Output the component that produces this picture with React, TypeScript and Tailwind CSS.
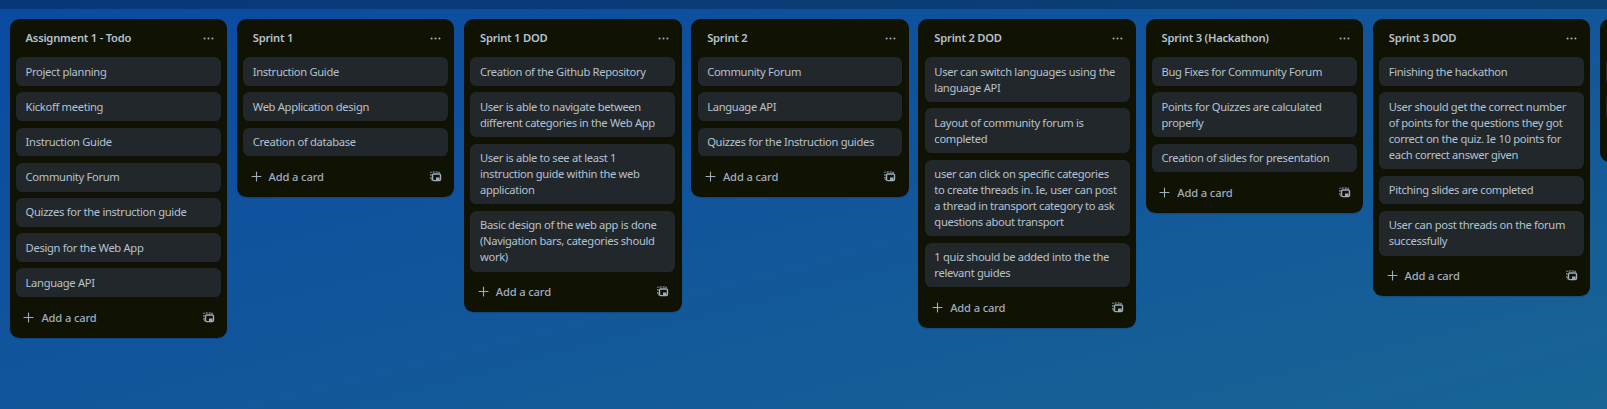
import React from "react";

type List = { title: string; cards: string[][] };

const lists: List[] = [
  {
    title: "Assignment 1 - Todo",
    cards: [
      ["Project planning"],
      ["Kickoff meeting"],
      ["Instruction Guide"],
      ["Community Forum"],
      ["Quizzes for the instruction guide"],
      ["Design for the Web App"],
      ["Language API"],
    ],
  },
  { title: "Sprint 1", cards: [["Instruction Guide"], ["Web Application design"], ["Creation of database"]] },
  {
    title: "Sprint 1 DOD",
    cards: [
      ["Creation of the Github Repository"],
      ["User is able to navigate between", "different categories in the Web App"],
      ["User is able to see at least 1", "instruction guide within the web", "application"],
      ["Basic design of the web app is done", "(Navigation bars, categories should", "work)"],
    ],
  },
  { title: "Sprint 2", cards: [["Community Forum"], ["Language API"], ["Quizzes for the Instruction guides"]] },
  {
    title: "Sprint 2 DOD",
    cards: [
      ["User can switch languages using the", "language API"],
      ["Layout of community forum is", "completed"],
      [
        "user can click on specific categories",
        "to create threads in. Ie, user can post",
        "a thread in transport category to ask",
        "questions about transport",
      ],
      ["1 quiz should be added into the the", "relevant guides"],
    ],
  },
  {
    title: "Sprint 3 (Hackathon)",
    cards: [
      ["Bug Fixes for Community Forum"],
      ["Points for Quizzes are calculated", "properly"],
      ["Creation of slides for presentation"],
    ],
  },
  {
    title: "Sprint 3 DOD",
    cards: [
      ["Finishing the hackathon"],
      [
        "User should get the correct number",
        "of points for the questions they got",
        "correct on the quiz. Ie 10 points for",
        "each correct answer given",
      ],
      ["Pitching slides are completed"],
      ["User can post threads on the forum", "successfully"],
    ],
  },
];

function MoreIcon() {
  return (
    <svg viewBox="0 0 13 13" className="size-[13px]" fill="currentColor">
      <circle cx="2.6" cy="6.5" r="1.05" />
      <circle cx="6.5" cy="6.5" r="1.05" />
      <circle cx="10.4" cy="6.5" r="1.05" />
    </svg>
  );
}

function PlusIcon() {
  return (
    <svg viewBox="0 0 13 13" className="size-[13px]" fill="none" stroke="currentColor" strokeWidth="1.1" strokeLinecap="round">
      <path d="M6.5 2v9M2 6.5h9" />
    </svg>
  );
}

function TemplateIcon() {
  return (
    <svg viewBox="0 0 13 13" className="size-[13px]" fill="none" stroke="currentColor">
      <path d="M1.3 2.300h1.400M3.700 2h2M6.700 2h2M9.500 2.400h1.200M1.900 4v1.800M1.900 7v1.800M1.900 9.800h1" strokeWidth="1.1" />
      <rect x="3.500" y="4" width="8" height="6.600" rx="1.300" strokeWidth="1.4" />
      <rect x="7" y="7.500" width="3.500" height="2.500" fill="currentColor" stroke="none" />
    </svg>
  );
}

function Column({ list }: { list: List }) {
  return (
    <section className="w-[217.6px] shrink-0 rounded-[9.6px] bg-[#101204] px-[6.4px] pb-[6.4px] text-[#b6c2cf] shadow-[0_1px_1px_rgba(9,30,66,0.25)]">
      <header className="flex h-[38px] items-center justify-between pr-[5.500px] pl-[9.6px]">
        <h2 className="text-[11.2px] leading-4 font-semibold tracking-[-0.23px] whitespace-nowrap">{list.title}</h2>
        <span className="text-[#9fadbc]"><MoreIcon /></span>
      </header>
      <ol className="flex flex-col gap-[6.4px]">
        {list.cards.map((lines, i) => (
          <li
            key={i}
            className="min-h-[28.8px] rounded-[6.4px] bg-[#22272b] px-[9.6px] py-[6.4px] text-[11.2px] leading-4 tracking-[-0.32px] shadow-[0_1px_1px_rgba(9,30,66,0.13)]"
          >
            {lines.map((line, j) => (
              <span key={j} className="block whitespace-nowrap">{line}</span>
            ))}
          </li>
        ))}
      </ol>
      <footer className="mt-[6.4px] flex h-7 items-center justify-between pr-[6px] pl-[6.4px] text-[#9fadbc]">
        <button className="flex items-center gap-[6px] text-[11.2px] leading-4 font-medium tracking-[-0.15px] whitespace-nowrap">
          <PlusIcon />
          Add a card
        </button>
        <TemplateIcon />
      </footer>
    </section>
  );
}

export default function App() {
  return (
    <main className="flex h-[409px] w-full flex-col overflow-hidden bg-[linear-gradient(to_bottom_right,#0b4aa2_0%,#11569b_50%,#186494_100%)] font-['Noto_Sans',sans-serif]">
      <div className="h-[9px] shrink-0 bg-black/25" />
      <div className="flex items-start gap-[9.6px] pt-[10.2px] pl-[9.6px]">
        {lists.map((list) => (
          <Column key={list.title} list={list} />
        ))}
        <section className="flex h-[142.4px] w-[217.6px] shrink-0 flex-col gap-[6.4px] rounded-[9.6px] bg-[#101204] px-[6.4px] pt-[38px]">
          <div className="h-[28.8px] rounded-[6.4px] bg-[#22272b]" />
          <div className="h-[28.8px] rounded-[6.4px] bg-[#22272b]" />
        </section>
      </div>
    </main>
  );
}
